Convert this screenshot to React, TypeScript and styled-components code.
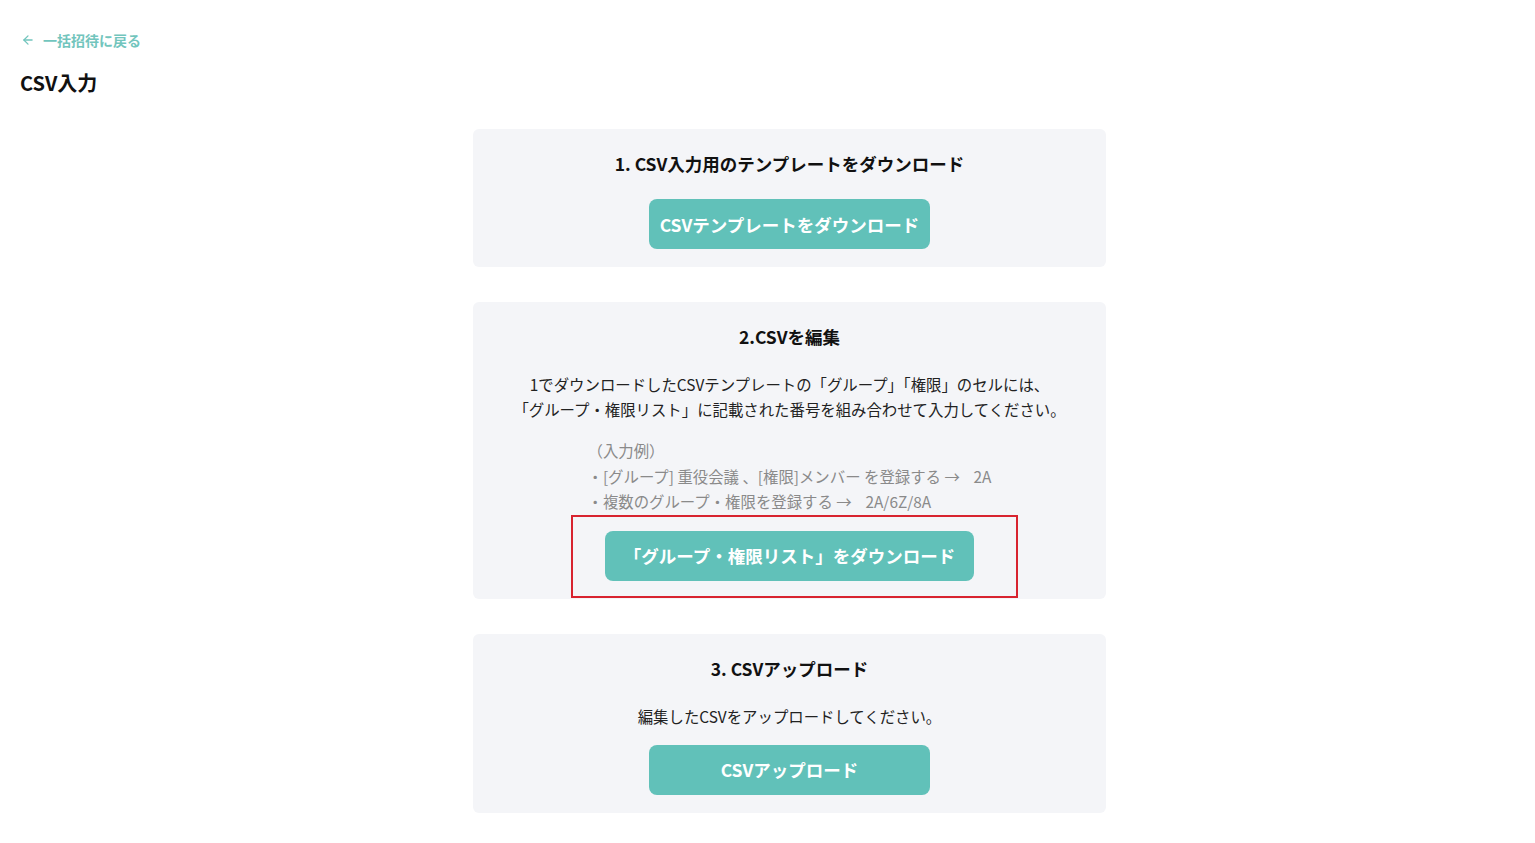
import React from 'react';
import styled, { createGlobalStyle } from 'styled-components';
import { ArrowLeft } from 'lucide-react';

const teal = '#61c1b9';

const GlobalStyle = createGlobalStyle`
    html, body {
        margin: 0;
        padding: 0;
        background: #ffffff;
    }
    body {
        font-family: 'Noto Sans CJK JP', 'Noto Sans', sans-serif;
        color: #1f1f1f;
    }
`;

const Page = styled.div`
    padding: 28px 0 40px 20px;
`;

const BackLink = styled.a`
    display: inline-flex;
    align-items: center;
    gap: 8px;
    margin-left: 1px;
    font-size: 14px;
    line-height: 20px;
    font-weight: 700;
    color: #72c5bd;
    text-decoration: none;
    cursor: pointer;
`;

const PageTitle = styled.h1`
    margin: 16px 0 0;
    font-size: 20px;
    line-height: 30px;
    font-weight: 700;
    color: #111;
`;

const Steps = styled.div`
    display: flex;
    flex-direction: column;
    align-items: center;
    gap: 35px;
    margin-top: 31px;
    padding-left: 24px;
`;

const Card = styled.section`
    width: 633px;
    box-sizing: border-box;
    background: #f4f5f8;
    border-radius: 6px;
    padding: 23px 0 18px;
    display: flex;
    flex-direction: column;
    align-items: center;
`;

const StepTitle = styled.h2`
    margin: 0 0 23px;
    font-size: 17.5px;
    line-height: 24px;
    font-weight: 700;
    color: #111;
`;

const Text = styled.p`
    margin: 0 0 16px;
    font-size: 15.4px;
    line-height: 25px;
    text-align: center;
    color: #222;
`;

const Example = styled.div`
    margin: 0 0 16px;
    font-size: 15.4px;
    line-height: 25.5px;
    color: #8a8a8a;
    text-align: left;
`;

const Highlight = styled.div`
    position: relative;
`;

const Annotation = styled.div`
    position: absolute;
    top: -16px;
    bottom: -17px;
    left: -34px;
    right: -44px;
    border: 2px solid #d8232f;
    pointer-events: none;
`;

const Button = styled.button<{ $width?: number }>`
    width: ${(p) => (p.$width ? `${p.$width}px` : 'auto')};
    height: 50px;
    padding: 0 8px;
    border: none;
    border-radius: 8px;
    background: ${teal};
    color: #fff;
    font-family: inherit;
    font-size: 17.5px;
    font-weight: 700;
    white-space: nowrap;
    cursor: pointer;
`;

export default function App() {
    return (
        <>
            <GlobalStyle />
            <Page>
                <BackLink>
                    <ArrowLeft size={14} strokeWidth={2.2} />
                    一括招待に戻る
                </BackLink>
                <PageTitle>CSV入力</PageTitle>
                <Steps>
                    <Card>
                        <StepTitle>1. CSV入力用のテンプレートをダウンロード</StepTitle>
                        <Button $width={281}>CSVテンプレートをダウンロード</Button>
                    </Card>
                    <Card>
                        <StepTitle>2.CSVを編集</StepTitle>
                        <Text>
                            1でダウンロードしたCSVテンプレートの「グループ」「権限」のセルには、
                            <br />
                            「グループ・権限リスト」に記載された番号を組み合わせて入力してください。
                        </Text>
                        <Example>
                            （入力例）
                            <br />
                            ・[グループ] 重役会議 、[権限]メンバー を登録する →&nbsp;&nbsp;&nbsp;&nbsp;2A
                            <br />
                            ・複数のグループ・権限を登録する →&nbsp;&nbsp;&nbsp;&nbsp;2A/6Z/8A
                        </Example>
                        <Highlight>
                            <Button $width={369}>「グループ・権限リスト」をダウンロード</Button>
                            <Annotation />
                        </Highlight>
                    </Card>
                    <Card>
                        <StepTitle>3. CSVアップロード</StepTitle>
                        <Text>編集したCSVをアップロードしてください。</Text>
                        <Button $width={281}>CSVアップロード</Button>
                    </Card>
                </Steps>
            </Page>
        </>
    );
}
